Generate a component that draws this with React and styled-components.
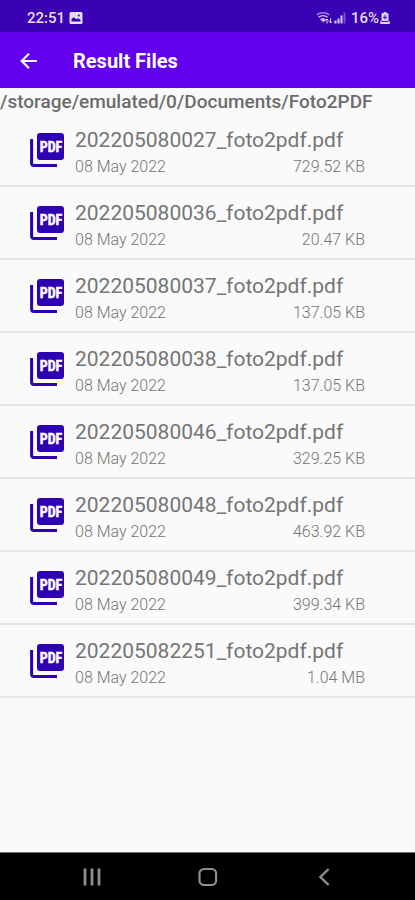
import styled, { createGlobalStyle } from "styled-components";

const files = [
  { name: "202205080027_foto2pdf.pdf", date: "08 May 2022", size: "729.52 KB" },
  { name: "202205080036_foto2pdf.pdf", date: "08 May 2022", size: "20.47 KB" },
  { name: "202205080037_foto2pdf.pdf", date: "08 May 2022", size: "137.05 KB" },
  { name: "202205080038_foto2pdf.pdf", date: "08 May 2022", size: "137.05 KB" },
  { name: "202205080046_foto2pdf.pdf", date: "08 May 2022", size: "329.25 KB" },
  { name: "202205080048_foto2pdf.pdf", date: "08 May 2022", size: "463.92 KB" },
  { name: "202205080049_foto2pdf.pdf", date: "08 May 2022", size: "399.34 KB" },
  { name: "202205082251_foto2pdf.pdf", date: "08 May 2022", size: "1.04 MB" },
];

export default function App() {
  return (
    <>
      <GlobalStyle />
      <Screen>
        <StatusBar>
          <StatusGroup>
            <span>22:51</span>
            <PictureIcon />
          </StatusGroup>
          <StatusGroup $tight>
            <WifiIcon />
            <SignalIcon />
            <span>16%</span>
            <BatteryIcon />
          </StatusGroup>
        </StatusBar>
        <AppBar>
          <BarButton aria-label="Back">
            <ArrowIcon />
          </BarButton>
          <Title>Result Files</Title>
        </AppBar>
        <Main>
          <Path>/storage/emulated/0/Documents/Foto2PDF</Path>
          <FileList>
            {files.map((file) => (
              <FileRow key={file.name}>
                <PdfIcon />
                <FileInfo>
                  <FileName>{file.name}</FileName>
                  <FileMeta>
                    <span>{file.date}</span>
                    <span>{file.size}</span>
                  </FileMeta>
                </FileInfo>
              </FileRow>
            ))}
          </FileList>
        </Main>
        <NavBar>
          <NavButton aria-label="Recent apps">
            <svg width="20" height="20" fill="none" stroke="#8e8e8e" strokeWidth="2.8">
              <path d="M4 1.5v17M11 1.5v17M18 1.5v17" />
            </svg>
          </NavButton>
          <NavButton aria-label="Home">
            <svg width="20" height="20" fill="none" stroke="#8e8e8e" strokeWidth="2.2">
              <rect x="1.5" y="2" width="16.6" height="16" rx="4.5" />
            </svg>
          </NavButton>
          <NavButton aria-label="Back">
            <svg width="20" height="20" fill="none" stroke="#8e8e8e" strokeWidth="2.4">
              <path d="M14.6 2L6.4 10l8.2 8" />
            </svg>
          </NavButton>
        </NavBar>
      </Screen>
    </>
  );
}

function PictureIcon() {
  return (
    <svg width="14" height="14" viewBox="0 0 14 14">
      <rect x="0.5" y="1" width="13" height="12" rx="1.5" fill="#e6dcfa" />
      <path d="M2.5 10.5V8l2.200-1.800 2.600 2 1.800-1 2.400 1.500v1.800z" fill="#3a00b4" />
      <circle cx="9.8" cy="4.4" r="1" fill="#3a00b4" />
    </svg>
  );
}

function WifiIcon() {
  return (
    <svg width="17" height="14" viewBox="0 0 17 14" fill="none" stroke="#c9b6f2">
      <path d="M0.8 3.8C4.2 1 9.8 1 13.2 3.8" strokeWidth="1.5" opacity="0.7" />
      <path d="M2.5 6.200c2.600-2 6.400-2 9 0" strokeWidth="1.6" />
      <path d="M4.600 8.400c1.500-1.100 3.300-1.100 4.800 0L7.500 11z" fill="#c9b6f2" />
      <path d="M11 12.500V8M9.500 9.500L11 8l1.500 1.500M14.500 7.500V12M13 10.500l1.500 1.500 1.500-1.500" stroke="#e6dcfa" />
    </svg>
  );
}

function SignalIcon() {
  return (
    <svg width="12" height="14" viewBox="0 0 12 14" fill="#d9cbf7">
      <rect x="0.5" y="9.5" width="2" height="3" />
      <rect x="3.5" y="7.5" width="2" height="5" />
      <rect x="6.5" y="4.5" width="2" height="8" />
      <rect x="9.5" y="1.5" width="2" height="11" opacity="0.4" />
    </svg>
  );
}

function BatteryIcon() {
  return (
    <svg width="10" height="14" viewBox="0 0 10 14">
      <path d="M3.5 1h3v1.300h2V10H9.700v3H0.300v-3h1.200V2.300h2z" fill="#e0d4f9" />
      <path d="M5 4v4.500M3 6.300h4M1.500 10.500h7" fill="none" stroke="#3a00b4" />
    </svg>
  );
}

function ArrowIcon() {
  return (
    <svg width="24" height="24" viewBox="0 0 24 24" fill="none" stroke="#fff" strokeWidth="2.2">
      <path d="M21 12H6.200M13 4.700L5.700 12l7.300 7.300" />
    </svg>
  );
}

function PdfIcon() {
  return (
    <PdfSvg width="34" height="34" viewBox="0 0 34 34" role="img" aria-label="PDF file">
      <path d="M1.600 6v24.200a2.200 2.200 0 0 0 2.200 2.200H27" fill="none" stroke="#2f00b2" strokeWidth="3" />
      <rect x="7" y="0" width="27" height="27" rx="3" fill="#2f00b2" />
      <text x="21" y="19" textAnchor="middle">
        PDF
      </text>
    </PdfSvg>
  );
}

const GlobalStyle = createGlobalStyle`
  * {
    box-sizing: border-box;
  }

  body {
    margin: 0;
    background-color: #fafafa;
    font-family: Roboto, "Liberation Sans", sans-serif;
  }
`;

const Screen = styled.div`
  display: flex;
  flex-direction: column;
  min-height: 100vh;
`;

const StatusBar = styled.div`
  display: flex;
  justify-content: space-between;
  align-items: center;
  height: 32px;
  padding: 3px 25px 0 27px;
  background-color: #3a00b4;
  color: #e6dcfa;
  font-size: 15px;
  font-weight: 500;
`;

const StatusGroup = styled.div`
  display: flex;
  align-items: center;
  gap: ${(props) => (props.$tight ? "1px" : "4px")};

  span {
    margin-left: ${(props) => (props.$tight ? "4px" : "0")};
  }
`;

const AppBar = styled.header`
  display: flex;
  align-items: center;
  height: 56px;
  padding: 2px 16px 0;
  background-color: #6200ee;
  color: #fff;
`;

const BarButton = styled.button`
  display: flex;
  width: 57px;
  padding: 0;
  border: none;
  background: none;
  cursor: pointer;
`;

const Title = styled.h1`
  margin: 0;
  font-size: 20px;
  font-weight: 700;
`;

const Main = styled.main`
  flex: 1;
`;

const Path = styled.p`
  margin: 0;
  padding-top: 2px;
  color: #6c6c6c;
  font-size: 19px;
  font-weight: 500;
  line-height: 24px;
  white-space: nowrap;
`;

const FileList = styled.ul`
  margin: 0;
  padding: 0;
  list-style: none;
`;

const FileRow = styled.li`
  display: flex;
  align-items: center;
  gap: 11px;
  height: 73px;
  padding: 0 50px 0 30px;
  border-bottom: 2px solid #e6e6e6;
`;

const PdfSvg = styled.svg`
  flex-shrink: 0;

  text {
    fill: #fff;
    stroke: #fff;
    stroke-width: 0.5px;
    font-family: "Liberation Sans Narrow", "Roboto Condensed", Roboto, sans-serif;
    font-size: 14px;
    font-weight: 700;
  }
`;

const FileInfo = styled.div`
  flex: 1;
  padding-top: 5px;
`;

const FileName = styled.div`
  margin-bottom: 1px;
  color: #757575;
  font-size: 21px;
  line-height: 28px;
`;

const FileMeta = styled.div`
  display: flex;
  justify-content: space-between;
  color: #757575;
  font-size: 16px;
  font-weight: 300;
  line-height: 24px;
`;

const NavBar = styled.nav`
  display: flex;
  justify-content: center;
  align-items: center;
  height: 48px;
  border-top: 1px solid #777;
  background-color: #000;
`;

const NavButton = styled.button`
  display: flex;
  justify-content: center;
  width: 28%;
  padding: 13px 0 12px;
  border: none;
  background: none;
  cursor: pointer;
`;
